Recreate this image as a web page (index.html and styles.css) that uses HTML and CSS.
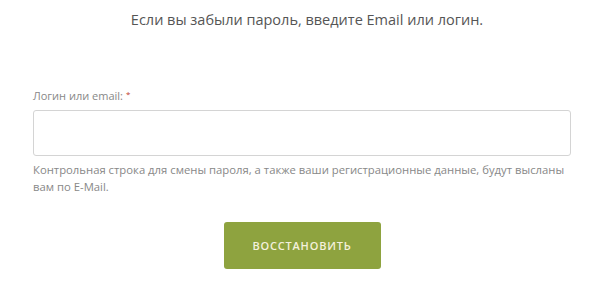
FILE: index.html
```html
<!DOCTYPE html>
<html lang="ru">
<head>
<meta charset="utf-8">
<link rel="stylesheet" href="styles.css">
</head>
<body>
<div class="page">
  <p class="intro">Если вы забыли пароль, введите Email или логин.</p>
  <form class="form">
    <label class="label" for="login">Логин или email:<span class="req">*</span></label>
    <input class="field" id="login" type="text">
    <p class="hint">Контрольная строка для смены пароля, а также ваши регистрационные данные, будут высланы вам по E-Mail.</p>
    <div class="actions"><button class="btn" type="button">Восстановить</button></div>
  </form>
</div>
</body>
</html>
```
FILE: styles.css
```css
html, body { margin: 0; padding: 0; background: #fff; }
body { font-family: "Open Sans", "DejaVu Sans", sans-serif; }
.page { width: 538px; padding: 10px 0 0 33px; }
.intro { margin: 0; text-align: center; font-size: 14.5px; line-height: 20px; color: #555; padding-left: 10px; }
.form { margin-top: 58px; display: flex; flex-direction: column; }
.label { font-size: 11px; line-height: 16px; color: #888; }
.req { color: #c0392b; margin-left: 3px; font-size: 8px; vertical-align: top; line-height: 12px; }
.field { margin-top: 6px; height: 46px; box-sizing: border-box; border: 1px solid #d4d4d4; border-radius: 3px; background: #fff; }
.hint { margin: 5px 0 0; font-size: 11.3px; line-height: 17px; color: #888; }
.actions { display: flex; justify-content: center; margin-top: 27px; }
.btn { width: 157px; height: 47px; border: none; border-radius: 3px; background: #8ea33f; color: #f4f1dc; font-family: inherit; font-size: 11px; font-weight: 600; text-transform: uppercase; letter-spacing: 0.8px; }
```
